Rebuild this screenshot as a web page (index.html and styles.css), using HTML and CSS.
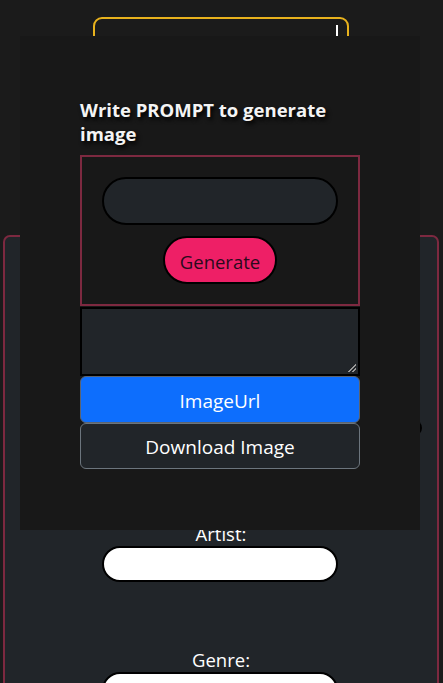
FILE: index.html
```html
<!DOCTYPE html>
<html>
<head>
<meta charset="utf-8">
<link rel="stylesheet" href="styles.css">
</head>
<body>
<div class="page">
  <div class="search-box"><span class="caret"></span></div>
  <div class="card">
    <div class="hidden-pill"></div>
    <label class="field-label">Artist:</label>
    <div class="white-input"></div>
    <label class="field-label genre">Genre:</label>
    <div class="white-input"></div>
  </div>
</div>
<div class="modal">
  <h2 class="modal-title">Write PROMPT to generate image</h2>
  <div class="prompt-box">
    <div class="prompt-input"></div>
    <button class="generate">Generate</button>
  </div>
  <div class="textarea"><span class="grip"></span></div>
  <button class="btn-primary">ImageUrl</button>
  <button class="btn-dark">Download Image</button>
</div>
</body>
</html>
```

FILE: styles.css
```css
* { box-sizing: border-box; }
html, body { margin: 0; padding: 0; }
body {
  background: #1b1b1b;
  font-family: "Open Sans", "Noto Sans", sans-serif;
  color: #f2f2f2;
  width: 443px;
  height: 683px;
  overflow: hidden;
  position: relative;
}
.page {
  display: flex;
  flex-direction: column;
  align-items: center;
  padding-top: 17px;
  height: 683px;
  overflow: hidden;
}
.search-box {
  width: 256px;
  height: 120px;
  flex-shrink: 0;
  border: 2px solid #e8b21d;
  border-radius: 9px;
  position: relative;
  margin-left: -1px;
}
.caret {
  position: absolute;
  right: 9px;
  top: 6px;
  width: 2px;
  height: 13px;
  background: #ffffff;
}
.card {
  margin-top: 98px;
  width: 436px;
  height: 500px;
  flex-shrink: 0;
  margin-left: 3px;
  align-self: flex-start;
  background: #212529;
  border: 2px solid #7d2940;
  border-radius: 7px;
  display: flex;
  flex-direction: column;
  align-items: center;
}
.hidden-pill {
  margin-top: 183px;
  width: 400px;
  height: 16px;
  border-radius: 8px;
  background: #000;
  margin-left: 1px;
}
.field-label {
  font-size: 18.5px;
  line-height: 24px;
  margin-top: 86px;
  color: #fff;
}
.field-label.genre { margin-top: 66px; }
.white-input {
  width: 236px;
  height: 36px;
  background: #fff;
  border: 2px solid #000;
  border-radius: 18px;
  margin-left: -3px;
}
.modal {
  position: absolute;
  left: 20px;
  top: 36px;
  width: 400px;
  height: 494px;
  background: #181818;
  padding: 62px 60px 0 60px;
  display: flex;
  flex-direction: column;
}
.modal-title {
  margin: 0 0 9px 0;
  font-size: 18.5px;
  line-height: 24px;
  font-weight: 700;
  color: #f4f4f4;
  text-shadow: 2px 3px 4px #000;
}
.prompt-box {
  border: 2px solid #7d2940;
  height: 151px;
  display: flex;
  flex-direction: column;
  align-items: center;
  padding-top: 20px;
  gap: 11px;
}
.prompt-input {
  width: 236px;
  height: 48px;
  background: #212529;
  border: 2px solid #000;
  border-radius: 24px;
}
.generate {
  width: 114px;
  height: 48px;
  background: #ee1f66;
  border: 2px solid #000;
  border-radius: 24px;
  font-family: inherit;
  font-size: 18.5px;
  color: #2a0a1c;
  padding: 2px 0 0 0;
}
.textarea {
  margin-top: 1px;
  height: 69px;
  background: #212529;
  border: 2px solid #000;
  position: relative;
}
.grip {
  position: absolute;
  right: 2px;
  bottom: 2px;
  width: 8px;
  height: 8px;
  background: linear-gradient(135deg, transparent 45%, #9a9a9a 45%, #9a9a9a 58%, transparent 58%, transparent 72%, #9a9a9a 72%, #9a9a9a 85%, transparent 85%);
}
.btn-primary, .btn-dark {
  font-family: inherit;
  font-size: 19px;
  color: #fff;
  border-radius: 6px;
  width: 280px;
  padding: 2px 0 0 0;
}
.btn-primary {
  height: 47px;
  background: #0d6efd;
  border: 1px solid #5c6470;
}
.btn-dark {
  height: 46px;
  background: #212529;
  border: 1px solid #6c757d;
}
```
